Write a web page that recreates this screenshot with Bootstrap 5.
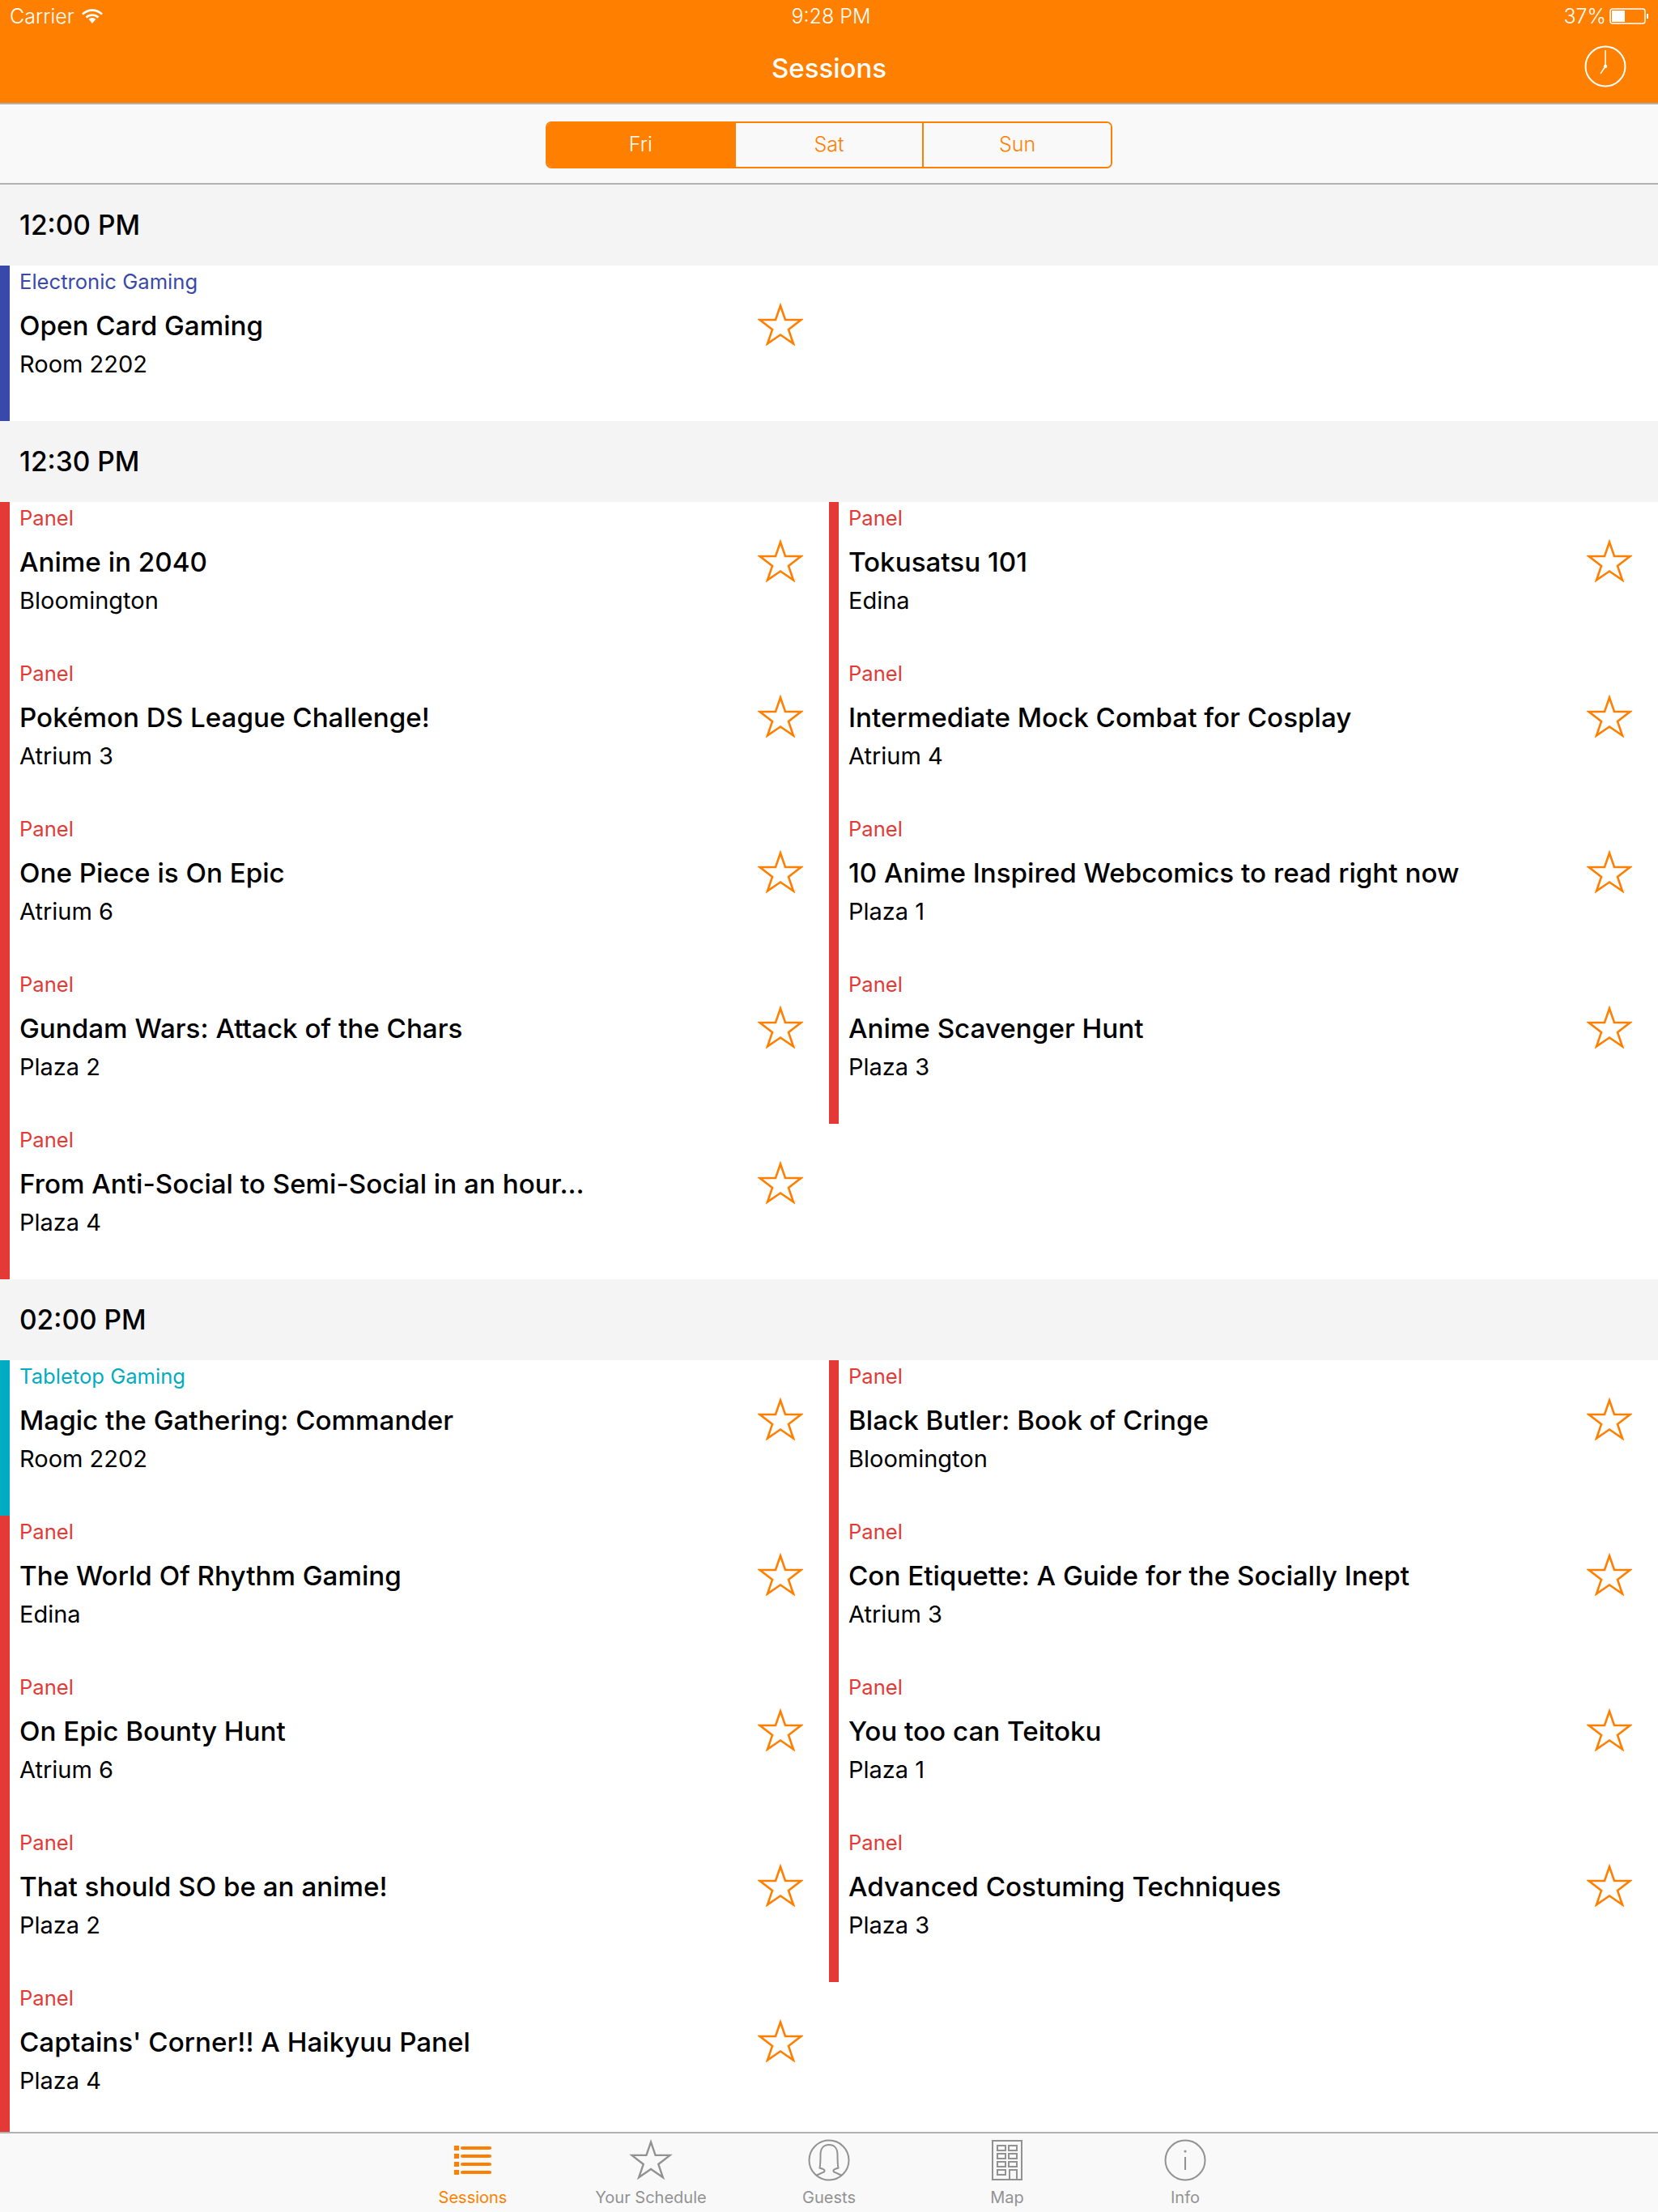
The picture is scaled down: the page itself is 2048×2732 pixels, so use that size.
<!DOCTYPE html>
<html lang="en">
<head>
    <meta charset="UTF-8">
    <meta name="viewport" content="width=device-width, initial-scale=1.0">
    <title>Sessions</title>
    <link href="https://cdn.jsdelivr.net/npm/bootstrap@5.3.0/dist/css/bootstrap.min.css" rel="stylesheet">
    <style>
        body {
            font-family: "Inter", "Liberation Sans", sans-serif;
            color: #000;
            background: #fff;
        }
        .app-shell { height: 2732px; }
        .top-bar {
            height: 129px;
            background: #ff7f00;
            border-bottom: 2px solid #b2b2b2;
            color: #fff;
            flex: none;
        }
        .status-row { height: 40px; padding: 0 11px 0 12px; font-size: 25px; line-height: 40px; font-weight: 300; }
        .status-side { width: 300px; }
        .status-time { margin-left: 4px; }
        .nav-row { height: 88px; padding-top: 2px; }
        .nav-title { font-size: 33px; font-weight: 500; }
        .clock-btn { right: 39px; top: 56px; }
        .day-bar {
            height: 99px;
            padding-top: 3px;
            background: #f9f9f9;
            border-bottom: 2px solid #b2b2b2;
            flex: none;
        }
        .day-switch { width: 700px; height: 58px; border: 2px solid #ff7f00; border-radius: 7px; overflow: hidden; }
        .day-item {
            flex: 1;
            font-size: 25px;
            font-weight: 300;
            color: #ff7f00;
            background: #f9f9f9;
            border-left: 2px solid #ff7f00;
        }
        .day-item:first-child { border-left: 0; }
        .day-item.is-on { background: #ff7f00; color: #fff; }
        .sessions-scroll { flex: 1 1 0; overflow: hidden; }
        .time-head {
            height: 100px;
            background: #f4f4f4;
            padding-left: 24px;
            font-size: 33.500px;
            font-weight: 550;
            line-height: 100px;
        }
        .slot {
            height: 192px;
            border-left: 12px solid var(--track);
            padding-left: 12px;
            padding-right: 32px;
        }
        .slot-track { color: var(--track); font-size: 25.600px; line-height: 40px; }
        .slot-title { font-size: 33.200px; font-weight: 550; line-height: 40px; margin-top: 14px; white-space: nowrap; }
        .slot-room { font-size: 29px; line-height: 40px; margin-top: 8px; }
        .slot-star { width: 56px; height: 53px; margin-top: 46px; flex: none; color: #ff7f00; }
        .tab-bar {
            height: 99px;
            background: #f9f9f9;
            border-top: 2px solid #b2b2b2;
            flex: none;
            color: #929292;
        }
        .tab-item { width: 220px; padding-top: 7px; font-size: 20px; line-height: 24px; }
        .tab-item.is-on { color: #ff7f00; }
        .tab-icon { height: 52px; margin-bottom: 8px; }
    </style>
</head>
<body>
    <svg width="0" height="0" class="d-block">
        <symbol id="star" viewBox="0 0 56 53" overflow="visible">
            <polygon points="28,3.500 34,21 53.500,21 38,33 44,50.500 28,39.500 12,50.500 18,33 2.500,21 22,21" fill="none" stroke="currentColor" stroke-width="2.600"/>
        </symbol>
    </svg>

    <div class="app-shell d-flex flex-column">
        <!-- Status and navigation -->
        <div class="top-bar position-relative">
            <div class="status-row d-flex justify-content-between">
                <div class="status-side d-flex align-items-center gap-2">
                    <span>Carrier</span>
                    <svg width="28" height="20" viewBox="0 0 28 20">
                        <path d="M2 7.500C9 1 19 1 26 7.500M6.500 11.500C11 7.500 17 7.500 21.500 11.500" fill="none" stroke="#fff" stroke-width="2.600"/>
                        <path d="M9.500 13.500C12.500 11.500 15.500 11.500 18.500 13.500L14 19z" fill="#fff"/>
                    </svg>
                </div>
                <div class="status-time">9:28 PM</div>
                <div class="status-side d-flex align-items-center justify-content-end gap-1">
                    <span>37%</span>
                    <svg width="49" height="20" viewBox="0 0 49 20">
                        <rect x="1" y="1" width="43" height="18" rx="3" fill="none" stroke="#fff" stroke-width="1.500"/>
                        <rect x="3" y="3" width="16" height="14" fill="#fff"/>
                        <rect x="46" y="7" width="2" height="6" fill="#fff"/>
                    </svg>
                </div>
            </div>
            <div class="nav-row d-flex align-items-center justify-content-center">
                <div class="nav-title">Sessions</div>
            </div>
            <svg class="clock-btn position-absolute" width="52" height="52" viewBox="0 0 52 52">
                <circle cx="26" cy="26" r="24.500" fill="none" stroke="#fff" stroke-width="2"/>
                <path d="M26 6V26L20 35" fill="none" stroke="#fff" stroke-width="1.500"/>
                <circle cx="26" cy="26" r="2.200" fill="#fff"/>
            </svg>
        </div>

        <!-- Day switch -->
        <div class="day-bar d-flex align-items-center justify-content-center">
            <div class="day-switch d-flex">
                <div class="day-item is-on d-flex align-items-center justify-content-center">Fri</div>
                <div class="day-item d-flex align-items-center justify-content-center">Sat</div>
                <div class="day-item d-flex align-items-center justify-content-center">Sun</div>
            </div>
        </div>

        <div class="sessions-scroll" id="sessions"></div>

        <!-- Tabs -->
        <div class="tab-bar d-flex justify-content-center">
            <div class="tab-item is-on text-center">
                <div class="tab-icon">
                    <svg width="48" height="52" viewBox="0 0 48 52">
                        <g fill="#ff7f00">
                            <rect x="1" y="8" width="6" height="6"/><rect x="9" y="9" width="38" height="4" rx="2"/>
                            <rect x="1" y="18" width="6" height="6"/><rect x="9" y="19" width="38" height="4" rx="2"/>
                            <rect x="1" y="28" width="6" height="6"/><rect x="9" y="29" width="38" height="4" rx="2"/>
                            <rect x="1" y="38" width="6" height="6"/><rect x="9" y="39" width="38" height="4" rx="2"/>
                        </g>
                    </svg>
                </div>
                Sessions
            </div>
            <div class="tab-item text-center">
                <div class="tab-icon">
                    <svg width="52" height="50" viewBox="0 0 56 53"><use href="#star"/></svg>
                </div>
                Your Schedule
            </div>
            <div class="tab-item text-center">
                <div class="tab-icon">
                    <svg width="52" height="52" viewBox="0 0 52 52" fill="none" stroke="#929292" stroke-width="2">
                        <circle cx="26" cy="26" r="24.500"/>
                        <path d="M10 45L20 40.500C21 39.500 20.500 37.500 18.500 37L14.500 35.500C15.500 31 15.500 26 15.500 19C15.500 11 20 7 26 7S36.500 11 36.500 19C36.500 26 36.500 31 37.500 35.500L33.500 37C31.500 37.500 31 39.500 32 40.500L42 45"/>
                    </svg>
                </div>
                Guests
            </div>
            <div class="tab-item text-center">
                <div class="tab-icon">
                    <svg width="38" height="52" viewBox="0 0 38 52" fill="none" stroke="#929292" stroke-width="2">
                        <rect x="1" y="2" width="36" height="48"/>
                        <rect x="7" y="8" width="10" height="6"/><rect x="21" y="8" width="10" height="6"/>
                        <rect x="7" y="18" width="10" height="6"/><rect x="21" y="18" width="10" height="6"/>
                        <rect x="7" y="28" width="10" height="6"/><rect x="21" y="28" width="10" height="6"/>
                        <rect x="7" y="38" width="10" height="6"/><path d="M22 50V38H31V50"/>
                    </svg>
                </div>
                Map
            </div>
            <div class="tab-item text-center">
                <div class="tab-icon">
                    <svg width="52" height="52" viewBox="0 0 52 52" fill="none" stroke="#929292" stroke-width="2">
                        <circle cx="26" cy="26" r="24.500"/>
                        <path d="M26 22V38"/>
                        <circle cx="26" cy="15" r="1.600" fill="#929292" stroke="none"/>
                    </svg>
                </div>
                Info
            </div>
        </div>
    </div>

    <script src="https://cdn.jsdelivr.net/npm/bootstrap@5.3.0/dist/js/bootstrap.bundle.min.js"></script>
    <script>
        const BLUE = '#3949ab', RED = '#e53935', TEAL = '#00acc1';

        // Each block has a left and a right column of sessions
        const blocks = [
            {
                time: '12:00 PM',
                left: [['Electronic Gaming', BLUE, 'Open Card Gaming', 'Room 2202']],
                right: []
            },
            {
                time: '12:30 PM',
                left: [
                    ['Panel', RED, 'Anime in 2040', 'Bloomington'],
                    ['Panel', RED, 'Pokémon DS League Challenge!', 'Atrium 3'],
                    ['Panel', RED, 'One Piece is On Epic', 'Atrium 6'],
                    ['Panel', RED, 'Gundam Wars: Attack of the Chars', 'Plaza 2'],
                    ['Panel', RED, 'From Anti-Social to Semi-Social in an hour...', 'Plaza 4']
                ],
                right: [
                    ['Panel', RED, 'Tokusatsu 101', 'Edina'],
                    ['Panel', RED, 'Intermediate Mock Combat for Cosplay', 'Atrium 4'],
                    ['Panel', RED, '10 Anime Inspired Webcomics to read right now', 'Plaza 1'],
                    ['Panel', RED, 'Anime Scavenger Hunt', 'Plaza 3']
                ]
            },
            {
                time: '02:00 PM',
                left: [
                    ['Tabletop Gaming', TEAL, 'Magic the Gathering: Commander', 'Room 2202'],
                    ['Panel', RED, 'The World Of Rhythm Gaming', 'Edina'],
                    ['Panel', RED, 'On Epic Bounty Hunt', 'Atrium 6'],
                    ['Panel', RED, 'That should SO be an anime!', 'Plaza 2'],
                    ['Panel', RED, "Captains' Corner!! A Haikyuu Panel", 'Plaza 4']
                ],
                right: [
                    ['Panel', RED, 'Black Butler: Book of Cringe', 'Bloomington'],
                    ['Panel', RED, 'Con Etiquette: A Guide for the Socially Inept', 'Atrium 3'],
                    ['Panel', RED, 'You too can Teitoku', 'Plaza 1'],
                    ['Panel', RED, 'Advanced Costuming Techniques', 'Plaza 3']
                ]
            }
        ];

        function createSlot([track, color, title, room]) {
            return `
                <div class="slot d-flex justify-content-between" style="--track: ${color}">
                    <div>
                        <div class="slot-track">${track}</div>
                        <div class="slot-title">${title}</div>
                        <div class="slot-room">${room}</div>
                    </div>
                    <svg class="slot-star" viewBox="0 0 56 53"><use href="#star"/></svg>
                </div>
            `;
        }

        document.getElementById('sessions').innerHTML = blocks.map(block => `
            <div class="time-head">${block.time}</div>
            <div class="row g-0">
                <div class="col-6">${block.left.map(createSlot).join('')}</div>
                <div class="col-6">${block.right.map(createSlot).join('')}</div>
            </div>
        `).join('');
    </script>
</body>
</html>
